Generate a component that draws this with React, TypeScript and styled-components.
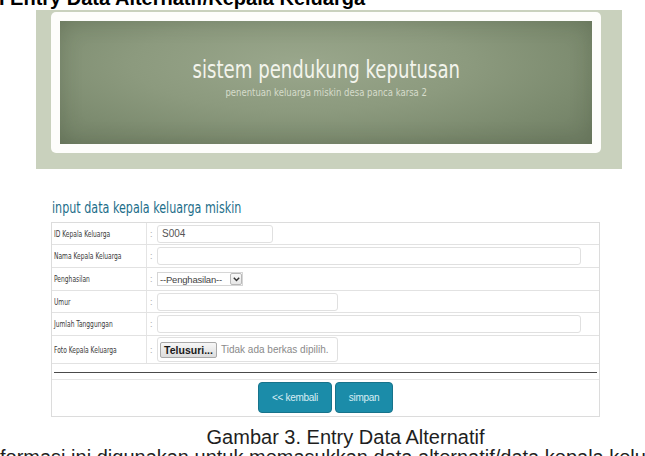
import styled, {createGlobalStyle} from 'styled-components';

const GlobalStyle = createGlobalStyle`
  html, body {
    margin: 0;
    padding: 0;
    background: #fff;
  }
  body {
    width: 645px;
    height: 456px;
    overflow: hidden;
    font-family: "Liberation Sans", Arial, sans-serif;
  }
`;

const condensed = `"DejaVu Sans Condensed", "DejaVu Sans", sans-serif`;

const Page = styled.div`
  width: 645px;
  height: 456px;
  overflow: hidden;
`;

const DocHeading = styled.div`
  margin: -12px 0 0 -1px;
  height: 20px;
  font: bold 20px/20px "Liberation Sans", Arial, sans-serif;
  color: #000;
  white-space: nowrap;
`;

const Banner = styled.div`
  margin: 2px 0 0 36px;
  width: 586px;
  height: 159px;
  box-sizing: border-box;
  padding: 2px 21px 16px 15px;
  background: #c9d1bd;
`;

const BannerFrame = styled.div`
  height: 141px;
  box-sizing: border-box;
  padding: 9px;
  background: #fdfdfb;
  border-radius: 5px;
`;

const BannerPanel = styled.div`
  height: 123px;
  display: flex;
  flex-direction: column;
  align-items: center;
  background: radial-gradient(ellipse 70% 85% at 45% 35%, #9aa78c 0%, #8c9a7e 45%, #7b8a6e 80%, #728166 100%);
  box-shadow: inset 0 0 22px rgba(40, 50, 30, 0.22);
`;

const BannerTitle = styled.div`
  margin-top: 35px;
  font-family: ${condensed};
  font-stretch: condensed;
  font-size: 24px;
  line-height: 28px;
  color: #f3f4ec;
  white-space: nowrap;
  transform: scaleX(0.84);
`;

const BannerSub = styled.div`
  margin-top: 3px;
  font-family: ${condensed};
  font-stretch: condensed;
  font-size: 11px;
  line-height: 12px;
  color: #d6dccb;
  white-space: nowrap;
  transform: scaleX(0.86);
`;

const SectionTitle = styled.div`
  margin: 30px 0 0 52px;
  height: 18px;
  font-family: ${condensed};
  font-stretch: condensed;
  font-size: 15.5px;
  line-height: 18px;
  color: #1d6e8a;
  white-space: nowrap;
  transform: scaleX(0.8);
  transform-origin: left center;
`;

const Table = styled.div`
  margin: 5px 0 0 51px;
  width: 549px;
  box-sizing: border-box;
  border: 1px solid #dcdcdc;
`;

const Row = styled.div<{$h: number}>`
  display: grid;
  grid-template-columns: 95px 9px 1fr;
  height: ${p => p.$h}px;
  border-bottom: 1px solid #e2e2e2;
`;

const Label = styled.div`
  display: flex;
  align-items: center;
  padding-left: 2px;
  border-right: 1px solid #e4e4e4;
  font-family: ${condensed};
  font-stretch: condensed;
  font-size: 8.5px;
  color: #3a3a3a;
  white-space: nowrap;
`;

const LabelText = styled.span`
  display: inline-block;
  transform: scaleX(0.78);
  transform-origin: left center;
`;

const Colon = styled.div`
  display: flex;
  align-items: center;
  padding-left: 3px;
  font-size: 9px;
  color: #aaa;
`;

const Field = styled.div`
  display: flex;
  align-items: center;
  padding-left: 1px;
`;

const TextInput = styled.div<{$w: number}>`
  width: ${p => p.$w}px;
  height: 18px;
  box-sizing: border-box;
  border: 1px solid #e0e0e0;
  border-radius: 3px;
  padding-left: 4px;
  display: flex;
  align-items: center;
  font-size: 10px;
  color: #555;
  background: #fff;
`;

const Select = styled.div`
  display: flex;
  align-items: center;
  width: 86px;
  height: 14px;
  box-sizing: border-box;
  border: 1px solid #d6d6d6;
  font-size: 9.5px;
  color: #444;
`;

const SelectText = styled.span`
  flex: 1;
  padding-left: 2px;
  letter-spacing: -0.2px;
`;

const SelectArrow = styled.span`
  width: 12px;
  height: 12px;
  box-sizing: border-box;
  border: 1px solid #b8b8b8;
  border-radius: 2px;
  background: linear-gradient(#fafafa, #e6e6e6);
  display: flex;
  align-items: center;
  justify-content: center;
`;

const FileBox = styled.div`
  width: 181px;
  height: 25px;
  box-sizing: border-box;
  border: 1px solid #e0e0e0;
  border-radius: 3px;
  display: flex;
  align-items: center;
  padding-left: 2px;
  gap: 4px;
`;

const FileButton = styled.span`
  width: 57px;
  height: 16px;
  box-sizing: border-box;
  border: 1px solid #a9a9a9;
  border-radius: 2px;
  background: linear-gradient(#f7f7f7, #dcdcdc);
  display: flex;
  align-items: center;
  justify-content: center;
  font-weight: bold;
  font-size: 10.5px;
  color: #1a1a1a;
`;

const FileText = styled.span`
  font-size: 10px;
  color: #8a8a8a;
  white-space: nowrap;
`;

const RuleRow = styled.div`
  height: 15px;
  padding: 0 2px;
  border-bottom: 1px solid #e6e6e6;
  display: flex;
  align-items: flex-start;
`;

const Rule = styled.div`
  margin-top: 8px;
  flex: 1;
  height: 1px;
  background: #4a4a4a;
`;

const ButtonRow = styled.div`
  height: 36px;
  display: flex;
  justify-content: center;
  align-items: flex-start;
  gap: 3px;
  padding-top: 2px;
  box-sizing: border-box;
`;

const Button = styled.span<{$w: number}>`
  width: ${p => p.$w}px;
  height: 31px;
  box-sizing: border-box;
  border: 1px solid #17738b;
  border-radius: 4px;
  background: #1b8ca9;
  color: #d8eef4;
  font-size: 10px;
  letter-spacing: -0.3px;
  display: flex;
  align-items: center;
  justify-content: center;
`;

const Caption = styled.div`
  margin-top: 10px;
  padding-left: 46px;
  height: 20px;
  text-align: center;
  font-size: 20px;
  line-height: 20px;
  color: #1e1e1e;
  white-space: nowrap;
`;

const BodyLine = styled.div`
  margin-left: 0;
  font-size: 20px;
  line-height: 20px;
  color: #1e1e1e;
  white-space: nowrap;
`;

const rows = [
  {label: 'ID Kepala Keluarga', h: 21, kind: 'id'},
  {label: 'Nama Kepala Keluarga', h: 22, kind: 'wide'},
  {label: 'Penghasilan', h: 22, kind: 'select'},
  {label: 'Umur', h: 21, kind: 'mid'},
  {label: 'Jumlah Tanggungan', h: 22, kind: 'wide'},
  {label: 'Foto Kepala Keluarga', h: 27, kind: 'file'},
];

function FieldControl({kind}: {kind: string}) {
  if (kind === 'id') return <TextInput $w={116}>S004</TextInput>;
  if (kind === 'wide') return <TextInput $w={424} />;
  if (kind === 'mid') return <TextInput $w={181} />;
  if (kind === 'select') {
    return (
      <Select>
        <SelectText>--Penghasilan--</SelectText>
        <SelectArrow>
          <svg width="7" height="5" viewBox="0 0 7 5">
            <path d="M0.8 0.8 L3.5 3.6 L6.2 0.8" fill="none" stroke="#333" strokeWidth="1.4" />
          </svg>
        </SelectArrow>
      </Select>
    );
  }
  return (
    <FileBox>
      <FileButton>Telusuri...</FileButton>
      <FileText>Tidak ada berkas dipilih.</FileText>
    </FileBox>
  );
}

export default function App() {
  return (
    <Page>
      <GlobalStyle />
      <DocHeading>I Entry Data Alternatif/Kepala Keluarga</DocHeading>
      <Banner>
        <BannerFrame>
          <BannerPanel>
            <BannerTitle>sistem pendukung keputusan</BannerTitle>
            <BannerSub>penentuan keluarga miskin desa panca karsa 2</BannerSub>
          </BannerPanel>
        </BannerFrame>
      </Banner>
      <SectionTitle>input data kepala keluarga miskin</SectionTitle>
      <Table>
        {rows.map(row => (
          <Row key={row.label} $h={row.h}>
            <Label>
              <LabelText>{row.label}</LabelText>
            </Label>
            <Colon>:</Colon>
            <Field>
              <FieldControl kind={row.kind} />
            </Field>
          </Row>
        ))}
        <RuleRow>
          <Rule />
        </RuleRow>
        <ButtonRow>
          <Button $w={74}>&lt;&lt; kembali</Button>
          <Button $w={58}>simpan</Button>
        </ButtonRow>
      </Table>
      <Caption>Gambar 3. Entry Data Alternatif</Caption>
      <BodyLine>formasi ini digunakan untuk memasukkan data alternatif/data kepala keluarga</BodyLine>
    </Page>
  );
}
